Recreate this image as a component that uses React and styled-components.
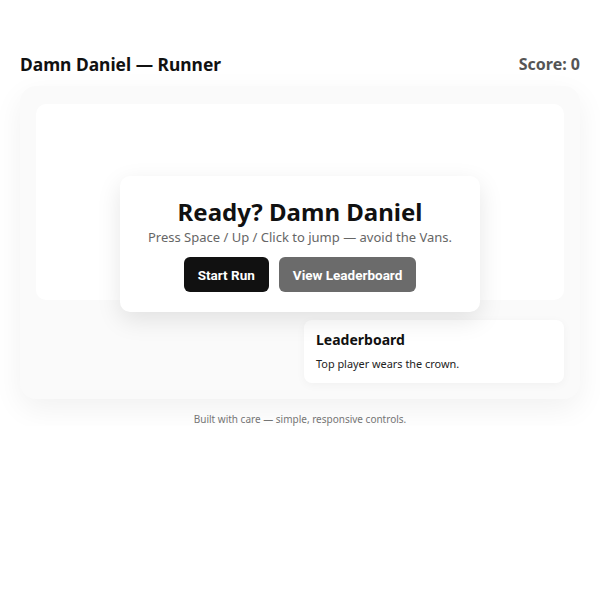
import React from "react";
import styled, { createGlobalStyle } from "styled-components";

const GlobalStyle = createGlobalStyle`
	body {
		margin: 0;
		background: #ffffff;
		font-family: "Noto Sans", "Open Sans", sans-serif;
		color: #111;
	}
`;

const Page = styled.div`
	width: 560px;
	margin: 0 auto;
	padding-top: 51px;
`;

const Header = styled.header`
	display: flex;
	justify-content: space-between;
	align-items: center;
	height: 26px;
	margin-bottom: 9px;
`;

const Title = styled.h1`
	margin: 0;
	font-size: 17.4px;
	font-weight: 700;
	color: #111;
`;

const Score = styled.div`
	font-size: 16px;
	font-weight: 700;
	color: #555;
`;

const Panel = styled.main`
	position: relative;
	background: #fafafa;
	border-radius: 16px;
	padding: 18px 16px 16px;
	box-shadow: 0 10px 30px rgba(0, 0, 0, 0.06);
`;

const Canvas = styled.div`
	height: 196px;
	background: #fff;
	border-radius: 10px;
`;

const Lower = styled.div`
	display: grid;
	grid-template-columns: 1fr 260px;
	gap: 8px;
	margin-top: 20px;
`;

const Card = styled.section`
	background: #fff;
	border-radius: 8px;
	padding: 10px 12px 11px;
	box-shadow: 0 2px 10px rgba(0, 0, 0, 0.04);
`;

const CardTitle = styled.h2`
	margin: 0 0 6px;
	font-size: 14px;
	line-height: 20px;
	font-weight: 700;
	color: #111;
`;

const CardText = styled.p`
	margin: 0;
	font-size: 10.9px;
	line-height: 16px;
	color: #222;
`;

const Overlay = styled.div`
	position: absolute;
	left: 100px;
	top: 90px;
	width: 360px;
	height: 136px;
	box-sizing: border-box;
	background: #fff;
	border-radius: 10px;
	box-shadow: 0 8px 24px rgba(0, 0, 0, 0.1);
	display: flex;
	flex-direction: column;
	align-items: center;
	padding-top: 20px;
`;

const Heading = styled.h2`
	margin: 0;
	font-size: 24px;
	line-height: 32px;
	font-weight: 700;
	color: #111;
`;

const Sub = styled.p`
	margin: 0 0 11px;
	font-size: 13px;
	line-height: 18px;
	color: #666;
`;

const Buttons = styled.div`
	display: flex;
	gap: 10px;
`;

const Button = styled.button`
	font-family: Roboto, "Liberation Sans", sans-serif;
	font-size: 13.5px;
	font-weight: 700;
	color: #fff;
	background: ${props => (props.secondary ? "#6b6b6b" : "#111")};
	border: none;
	border-radius: 6px;
	height: 35px;
	padding: 0 14px;
	cursor: pointer;
`;

const Footer = styled.footer`
	text-align: center;
	font-size: 10px;
	color: #777;
	margin-top: 13px;
`;

export default function App() {
	return (
		<>
			<GlobalStyle />
			<Page>
				<Header>
					<Title>Damn Daniel — Runner</Title>
					<Score>Score: 0</Score>
				</Header>
				<Panel>
					<Canvas />
					<Lower>
						<div />
						<Card>
							<CardTitle>Leaderboard</CardTitle>
							<CardText>Top player wears the crown.</CardText>
						</Card>
					</Lower>
					<Overlay>
						<Heading>Ready? Damn Daniel</Heading>
						<Sub>Press Space / Up / Click to jump — avoid the Vans.</Sub>
						<Buttons>
							<Button>Start Run</Button>
							<Button secondary>View Leaderboard</Button>
						</Buttons>
					</Overlay>
				</Panel>
				<Footer>Built with care — simple, responsive controls.</Footer>
			</Page>
		</>
	);
}
